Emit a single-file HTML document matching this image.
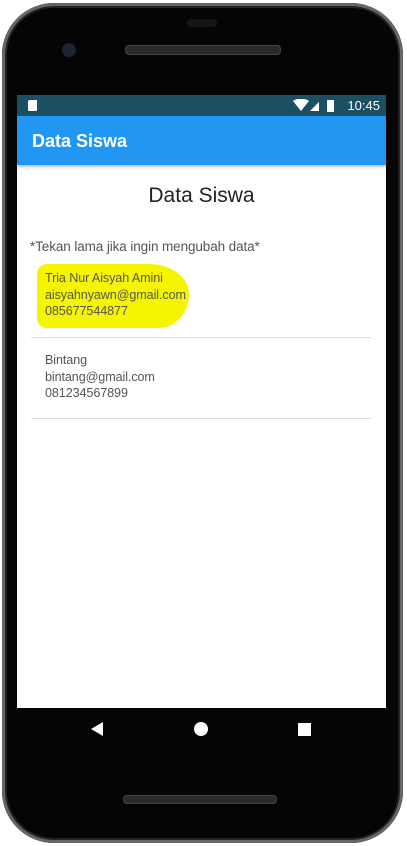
<!DOCTYPE html>
<html><head><style>
body{margin:0;width:407px;height:846px;background:#fff;position:relative;overflow:hidden;font-family:"Liberation Sans",sans-serif}
.phone{position:absolute;left:2px;top:3px;width:401px;height:840px;background:#050505;border-radius:52px;box-shadow:inset 0 0 0 3px #666,inset 0 0 0 5px #222}
.screen{position:absolute;left:17px;top:95px;width:369px;height:613px;background:#fff;overflow:hidden}
.sb{height:21px;background:#1b4f62;position:relative;color:#fff;font-size:13px}
.ab{height:49px;background:#2196f3;color:#fff;font-size:18px;font-weight:bold;line-height:50px;padding-left:15px;box-shadow:0 2px 3px rgba(0,0,0,.25)}
.t{position:absolute;color:#555;font-size:12.6px;line-height:16.5px;letter-spacing:-0.1px}
.hl{position:absolute;left:20px;top:169px;width:152px;height:64px;background:#f5f500;border-radius:10px 40px 30px 10px/10px 30px 34px 10px}
.line{position:absolute;left:14px;width:340px;height:1px;background:#ddd}
</style></head><body>
<div class="phone"></div>
<div style="position:absolute;left:62px;top:43px;width:14px;height:14px;border-radius:50%;background:#1c2333"></div>
<div style="position:absolute;left:125px;top:45px;width:154px;height:8px;border-radius:4px;background:#2a2a2a;border:1px solid #444"></div>
<div style="position:absolute;left:187px;top:19px;width:30px;height:8px;border-radius:4px;background:#161616"></div>
<div style="position:absolute;left:123px;top:795px;width:152px;height:7px;border-radius:4px;background:#2a2a2a;border:1px solid #444"></div>
<div class="screen">
<div class="sb"><div style="position:absolute;left:11px;top:5px;width:9px;height:11px;background:#fff;border-radius:2px 0 1px 1px"></div>
<svg style="position:absolute;left:276px;top:4px" width="48" height="13"><path d="M0 2 Q8 -3 16 2 L8 12Z" fill="#fff"/><path d="M17 12 L26 3 L26 12Z" fill="#fff"/><rect x="34" y="1" width="7" height="12" fill="#fff"/></svg>
<span style="position:absolute;right:6px;top:3px">10:45</span></div>
<div class="ab">Data Siswa</div>
<div style="position:absolute;top:89px;width:100%;text-align:center;font-size:21px;color:#222">Data Siswa</div>
<div class="t" style="left:13px;top:144px;font-size:13.5px">*Tekan lama jika ingin mengubah data*</div>
<div class="hl"></div>
<div class="t" style="left:28px;top:175px">Tria Nur Aisyah Amini<br>aisyahnyawn@gmail.com<br>085677544877</div>
<div class="line" style="top:242px"></div>
<div class="t" style="left:28px;top:257px">Bintang<br>bintang@gmail.com<br>081234567899</div>
<div class="line" style="top:323px"></div>
</div>
<svg style="position:absolute;left:0;top:708px" width="407" height="40"><path d="M91 21 L103 14 L103 28Z" fill="#fff"/><circle cx="201" cy="21" r="7" fill="#fff"/><rect x="298" y="15" width="13" height="13" fill="#fff"/></svg>
</body></html>
